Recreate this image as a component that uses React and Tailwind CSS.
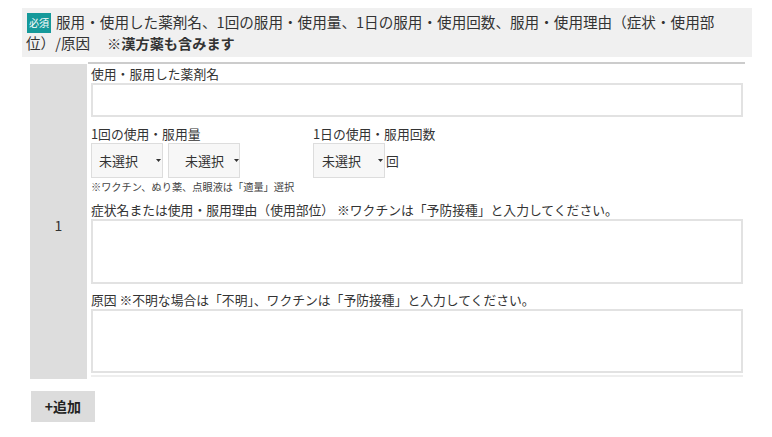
import React from 'react';

const font = { fontFamily: '"Noto Sans CJK JP", "Noto Sans", sans-serif' };

// small dropdown arrow used in the select boxes
const Caret = () => (
    <svg width="5" height="3" viewBox="0 0 5 3" className="shrink-0">
        <path d="M0 0h5L2.5 3z" fill="#333" />
    </svg>
);

const SelectBox = ({ textPad, caretPad }) => (
    <div className="w-[72px] h-[35px] bg-[#f7f7f7] border border-[#dddddd] flex items-center text-[13px] text-[#333]">
        <span className={textPad}>未選択</span>
        <span className={caretPad}><Caret /></span>
    </div>
);

const App = () => {
    return (
        <div className="w-[772px] h-[437px] bg-white pt-2 text-[#333]" style={font}>
            {/* Heading */}
            <div className="ml-[22px] w-[730px] h-[49px] bg-[#f0f0f0] pl-1 pr-5 pt-[3px] text-[14.6px] leading-[21px]">
                <span className="relative top-[2px] inline-block align-top h-[20px] bg-[#15999a] text-white text-[10px] leading-[20px] w-[24px] text-center mr-[5px] ml-[1px]">必須</span>
                服用・使用した薬剤名、1回の服用・使用量、1日の服用・使用回数、服用・使用理由（症状・使用部位）/原因
                <span className="font-bold text-[14.2px] ml-[17px]">※漢方薬も含みます</span>
            </div>

            {/* Medicine row */}
            <div className="ml-[30px] mt-[5px] w-[715px] flex">
                <div className="w-[57px] mt-[2px] bg-[#dddddd] flex items-center justify-center text-[14px] pt-[8px]">1</div>
                <div className="flex-1 ml-[1px] border-t-2 border-[#cccccc] pl-[3px] pr-[2px] pb-[2px]">
                    <div className="text-[12.8px] leading-[16px] mt-[2px]">使用・服用した薬剤名</div>
                    <div className="h-[34px] mt-[1px] border-2 border-[#e2e2e2] bg-white"></div>

                    <div className="flex mt-[9px]">
                        <div className="w-[222px]">
                            <div className="text-[12.8px] leading-[16px]">1回の使用・服用量</div>
                            <div className="flex gap-[5px] mt-[1px]">
                                <SelectBox textPad="ml-[7px]" caretPad="ml-[18px]" />
                                <SelectBox textPad="ml-[16px]" caretPad="ml-[10px]" />
                            </div>
                        </div>
                        <div>
                            <div className="text-[12.8px] leading-[16px]">1日の使用・服用回数</div>
                            <div className="flex items-center mt-[1px]">
                                <SelectBox textPad="ml-[8px]" caretPad="ml-[17px]" />
                                <span className="text-[12.8px] ml-[1px]">回</span>
                            </div>
                        </div>
                    </div>
                    <div className="text-[10.2px] leading-[14px] mt-[2px] text-[#444]">※ワクチン、ぬり薬、点眼液は「適量」選択</div>

                    <div className="text-[12.8px] leading-[16px] mt-[8px]">症状名または使用・服用理由（使用部位） ※ワクチンは「予防接種」と入力してください。</div>
                    <div className="h-[65px] mt-[1px] border-2 border-[#e2e2e2] bg-white"></div>

                    <div className="text-[12.8px] leading-[16px] mt-[8px]">原因 ※不明な場合は「不明」、ワクチンは「予防接種」と入力してください。</div>
                    <div className="h-[64px] mt-[1px] border-2 border-[#e2e2e2] bg-white"></div>
                    <div className="h-[4px] border-b-2 border-[#eeeeee]"></div>
                </div>
            </div>

            {/* Add button */}
            <div className="ml-[31px] mt-[12px] w-[64px] h-[31px] bg-[#dcdcdc] flex items-center justify-center text-[14px] font-bold text-[#222]">
                +追加
            </div>
        </div>
    );
};

export default App;
